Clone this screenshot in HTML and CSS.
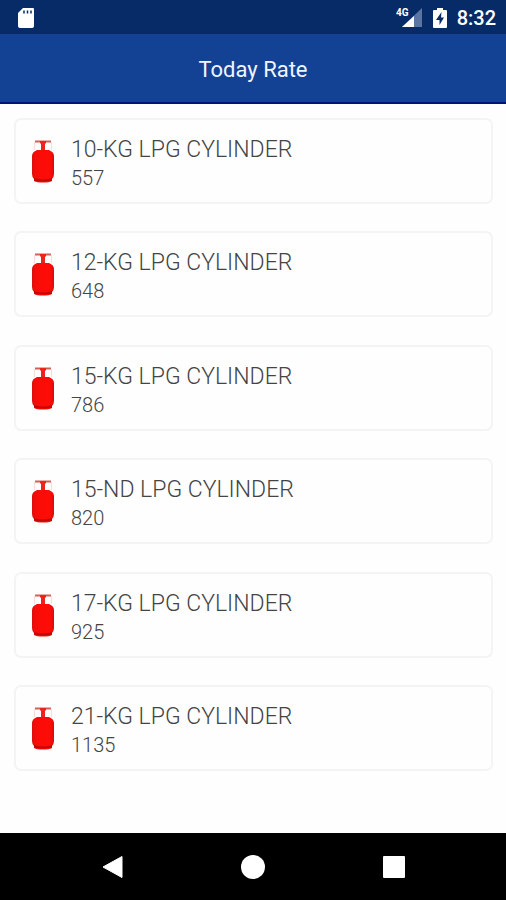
FILE: index.html
```html
<!DOCTYPE html>
<html lang="en">
    <head>
        <meta charset="UTF-8">
        <meta name="viewport" content="width=device-width, initial-scale=1">
        <title>Today Rate</title>
        <link rel="stylesheet" href="styles.css">
    </head>
    <body>
        <!-- Cylinder drawing, shared by all the rows -->
        <svg class="sprite" aria-hidden="true">
            <defs>
                <linearGradient id="body" x1="0" x2="1" y1="0" y2="0">
                    <stop offset="0" stop-color="#d91010"/>
                    <stop offset="0.18" stop-color="#f80c08"/>
                    <stop offset="0.8" stop-color="#ff0c06"/>
                    <stop offset="1" stop-color="#d80c0c"/>
                </linearGradient>
            </defs>
            <symbol id="cylinder" viewBox="0 0 26 44">
                <path d="M4.5 3v8M21.5 3v8" stroke="#fadcd8" stroke-width="1.2"/>
                <path d="M5 2.5h16" stroke="#d0605a" stroke-width="2"/>
                <path d="M10 2h6v2l-1 1v7h-4V5l-1-1z" fill="#f0221c"/>
                <path d="M7 11h12q5 2 5 6v18q0 3-2 5v2q-3 1.500-9 1.500t-9-1.500v-2q-2-2-2-5v-18q0-4 5-6z" fill="url(#body)"/>
                <path d="M4 39q9 3 18 0v2.500q-9 2-18 0z" fill="#c00a08"/>
            </symbol>
        </svg>

        <div class="status">
            <svg width="18" height="22" viewBox="0 0 18 22" aria-hidden="true">
                <path d="M6 1h10q1 0 1 1v17q0 2-2 2H3q-2 0-2-2V6z" fill="#fff"/>
                <path d="M7 3.500v3M10.500 3.500v3M14 3.500v3" stroke="#072b66" stroke-width="1.500"/>
            </svg>
            <div class="status-right">
                <svg class="signal" width="27" height="22" viewBox="0 0 27 22" aria-hidden="true">
                    <path d="M26 1v19H6z" fill="#5b75a2"/>
                    <path d="M18 9v11H6z" fill="#fff"/>
                    <text class="network" x="0" y="9">4G</text>
                </svg>
                <svg class="battery" width="14" height="22" viewBox="0 0 14 22" aria-hidden="true">
                    <path d="M4 1h6v2h3q1 0 1 1v16q0 1-1 1H1q-1 0-1-1V4q0-1 1-1h3z" fill="#fff"/>
                    <path d="M8.500 5L3 13h3.500v5L11 10.500H8z" fill="#072b66"/>
                </svg>
                <span class="clock">8:32</span>
            </div>
        </div>

        <header class="header">
            <h1>Today Rate</h1>
        </header>

        <main class="rates">
            <div class="card">
                <svg class="cylinder"><use href="#cylinder"/></svg>
                <div class="info">
                    <h2>10-KG LPG CYLINDER</h2>
                    <p>557</p>
                </div>
            </div>
            <div class="card">
                <svg class="cylinder"><use href="#cylinder"/></svg>
                <div class="info">
                    <h2>12-KG LPG CYLINDER</h2>
                    <p>648</p>
                </div>
            </div>
            <div class="card">
                <svg class="cylinder"><use href="#cylinder"/></svg>
                <div class="info">
                    <h2>15-KG LPG CYLINDER</h2>
                    <p>786</p>
                </div>
            </div>
            <div class="card">
                <svg class="cylinder"><use href="#cylinder"/></svg>
                <div class="info">
                    <h2>15-ND LPG CYLINDER</h2>
                    <p>820</p>
                </div>
            </div>
            <div class="card">
                <svg class="cylinder"><use href="#cylinder"/></svg>
                <div class="info">
                    <h2>17-KG LPG CYLINDER</h2>
                    <p>925</p>
                </div>
            </div>
            <div class="card">
                <svg class="cylinder"><use href="#cylinder"/></svg>
                <div class="info">
                    <h2>21-KG LPG CYLINDER</h2>
                    <p>1135</p>
                </div>
            </div>
        </main>

        <nav class="navbar">
            <button type="button" aria-label="Back">
                <svg width="24" height="24" viewBox="0 0 24 24"><path d="M22 1.500v21L3 12z" fill="#fff" stroke="#fff" stroke-linejoin="round"/></svg>
            </button>
            <button type="button" aria-label="Home">
                <svg width="24" height="24" viewBox="0 0 24 24"><circle cx="12" cy="12" r="12" fill="#fff"/></svg>
            </button>
            <button type="button" aria-label="Recent apps">
                <svg width="24" height="24" viewBox="0 0 24 24"><rect x="1" y="1" width="22" height="22" rx="1" fill="#fff"/></svg>
            </button>
        </nav>
    </body>
</html>
```
FILE: styles.css
```css
* {
    box-sizing: border-box;
}

body {
    display: flex;
    flex-direction: column;
    min-height: 100vh;
    margin: 0;
    background: #fefefe;
    font-family: Roboto, "Liberation Sans", sans-serif;
}

h1, h2, p {
    margin: 0;
}

.sprite {
    position: absolute;
    width: 0;
    height: 0;
}

.status {
    display: flex;
    align-items: center;
    justify-content: space-between;
    height: 34px;
    padding: 2px 10px 0 17px;
    background: #072b66;
    color: #fff;
}

.status-right {
    display: flex;
    align-items: center;
}

.signal {
    margin-right: 10px;
}

.network {
    fill: #fff;
    font-size: 10px;
    font-weight: 700;
}

.battery {
    margin-right: 10px;
}

.clock {
    font-size: 20px;
    font-weight: 500;
    line-height: 24px;
}

.header {
    display: flex;
    align-items: center;
    justify-content: center;
    height: 70px;
    padding-top: 4px;
    background: #134194;
    border-bottom: 2px solid #04107c;
    color: #f0f4ff;
}

.header h1 {
    font-size: 22px;
    font-weight: 400;
    line-height: 28px;
}

.rates {
    display: flex;
    flex: 1;
    flex-direction: column;
    justify-content: space-between;
    padding: 14px 13px 62px 14px;
}

.card {
    display: flex;
    align-items: center;
    gap: 15px;
    height: 86px;
    padding: 0 14px;
    border: 2px solid #f4f4f5;
    border-radius: 7px;
    color: #444;
}

.cylinder {
    width: 26px;
    height: 44px;
}

.info {
    padding-top: 6px;
}

.card h2 {
    font-size: 23px;
    font-weight: 300;
    line-height: 28px;
}

.card p {
    font-size: 20px;
    font-weight: 300;
    line-height: 28px;
}

.navbar {
    display: flex;
    justify-content: center;
    gap: 117px;
    height: 67px;
    background: #000;
}

.navbar button {
    display: flex;
    align-items: center;
    padding: 0;
    border: 0;
    background: none;
}
```
